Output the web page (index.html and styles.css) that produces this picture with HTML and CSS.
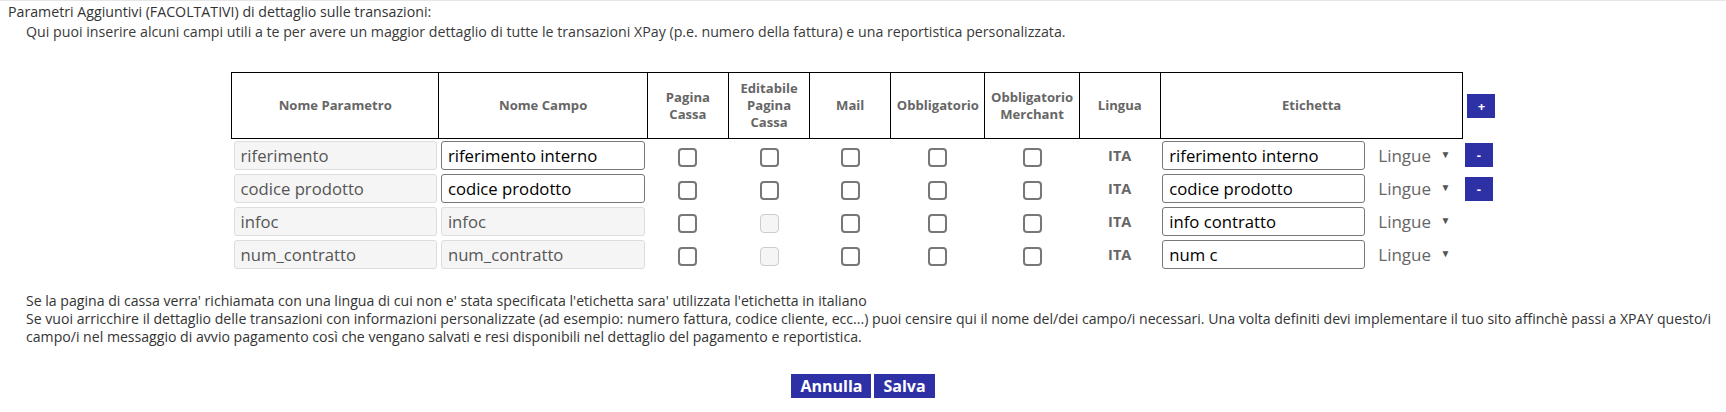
FILE: index.html
```html
<!DOCTYPE html>
<html lang="it">
<head>
    <meta charset="UTF-8">
    <title>Parametri Aggiuntivi</title>
    <link rel="stylesheet" href="styles.css">
</head>
<body>
    <div class="page">
        <div class="intro">
            <div class="intro-title">Parametri Aggiuntivi (FACOLTATIVI) di dettaglio sulle transazioni:</div>
            <div class="intro-text">Qui puoi inserire alcuni campi utili a te per avere un maggior dettaglio di tutte le transazioni XPay (p.e. numero della fattura) e una reportistica personalizzata.</div>
        </div>

        <table class="params">
            <colgroup>
                <col class="c-name">
                <col class="c-field">
                <col class="c-chk">
                <col class="c-chk">
                <col class="c-chk">
                <col class="c-wide">
                <col class="c-wide">
                <col class="c-chk">
                <col class="c-label">
                <col class="c-action">
            </colgroup>
            <thead>
                <tr>
                    <th>Nome Parametro</th>
                    <th>Nome Campo</th>
                    <th>Pagina<br>Cassa</th>
                    <th>Editabile<br>Pagina<br>Cassa</th>
                    <th>Mail</th>
                    <th>Obbligatorio</th>
                    <th>Obbligatorio<br>Merchant</th>
                    <th>Lingua</th>
                    <th>Etichetta</th>
                    <th class="action"><button class="btn-small">+</button></th>
                </tr>
            </thead>
            <tbody>
                <tr>
                    <td><input type="text" class="field readonly" value="riferimento" readonly></td>
                    <td><input type="text" class="field" value="riferimento interno"></td>
                    <td><input type="checkbox"></td>
                    <td><input type="checkbox"></td>
                    <td><input type="checkbox"></td>
                    <td><input type="checkbox"></td>
                    <td><input type="checkbox"></td>
                    <td class="lang">ITA</td>
                    <td>
                        <div class="label-cell">
                            <input type="text" class="field label-input" value="riferimento interno">
                            <span class="lingue">Lingue <span class="caret">&#9660;</span></span>
                        </div>
                    </td>
                    <td class="action"><button class="btn-small">-</button></td>
                </tr>
                <tr>
                    <td><input type="text" class="field readonly" value="codice prodotto" readonly></td>
                    <td><input type="text" class="field" value="codice prodotto"></td>
                    <td><input type="checkbox"></td>
                    <td><input type="checkbox"></td>
                    <td><input type="checkbox"></td>
                    <td><input type="checkbox"></td>
                    <td><input type="checkbox"></td>
                    <td class="lang">ITA</td>
                    <td>
                        <div class="label-cell">
                            <input type="text" class="field label-input" value="codice prodotto">
                            <span class="lingue">Lingue <span class="caret">&#9660;</span></span>
                        </div>
                    </td>
                    <td class="action"><button class="btn-small">-</button></td>
                </tr>
                <tr>
                    <td><input type="text" class="field readonly" value="infoc" readonly></td>
                    <td><input type="text" class="field readonly" value="infoc" readonly></td>
                    <td><input type="checkbox"></td>
                    <td><input type="checkbox" disabled></td>
                    <td><input type="checkbox"></td>
                    <td><input type="checkbox"></td>
                    <td><input type="checkbox"></td>
                    <td class="lang">ITA</td>
                    <td>
                        <div class="label-cell">
                            <input type="text" class="field label-input" value="info contratto">
                            <span class="lingue">Lingue <span class="caret">&#9660;</span></span>
                        </div>
                    </td>
                    <td class="action"></td>
                </tr>
                <tr>
                    <td><input type="text" class="field readonly" value="num_contratto" readonly></td>
                    <td><input type="text" class="field readonly" value="num_contratto" readonly></td>
                    <td><input type="checkbox"></td>
                    <td><input type="checkbox" disabled></td>
                    <td><input type="checkbox"></td>
                    <td><input type="checkbox"></td>
                    <td><input type="checkbox"></td>
                    <td class="lang">ITA</td>
                    <td>
                        <div class="label-cell">
                            <input type="text" class="field label-input" value="num c">
                            <span class="lingue">Lingue <span class="caret">&#9660;</span></span>
                        </div>
                    </td>
                    <td class="action"></td>
                </tr>
            </tbody>
        </table>

        <div class="notes">
            Se la pagina di cassa verra' richiamata con una lingua di cui non e' stata specificata l'etichetta sara' utilizzata l'etichetta in italiano<br>
            Se vuoi arricchire il dettaglio delle transazioni con informazioni personalizzate (ad esempio: numero fattura, codice cliente, ecc...) puoi censire qui il nome del/dei campo/i necessari. Una volta definiti devi implementare il tuo sito affinchè passi a XPAY questo/i campo/i nel messaggio di avvio pagamento così che vengano salvati e resi disponibili nel dettaglio del pagamento e reportistica.
        </div>

        <div class="actions">
            <button class="btn">Annulla</button>
            <button class="btn">Salva</button>
        </div>
    </div>
</body>
</html>
```

FILE: styles.css
```css
body {
    margin: 0;
    font-family: "Open Sans", "Liberation Sans", sans-serif;
    font-size: 14.2px;
    color: #333;
    background-color: #fff;
}

.page {
    border-top: 1px solid #e6e6e6;
}

.intro {
    padding: 1px 8px 0 8px;
    line-height: 20px;
}

.intro-title {
    color: #333;
}

.intro-text {
    padding-left: 18px;
    color: #3a3a3a;
}

.params {
    margin: 30px auto 0 auto;
    border-collapse: collapse;
    table-layout: fixed;
    width: 1264px;
}

.c-name { width: 207px; }
.c-field { width: 208px; }
.c-chk { width: 81px; }
.c-wide { width: 94px; }
.c-label { width: 302px; }
.c-action { width: 32px; }

.params th {
    border: 1px solid #000;
    height: 65px;
    padding: 0;
    font-size: 13.1px;
    font-weight: bold;
    line-height: 17px;
    color: #666;
    text-align: center;
}

.params th.action {
    border: none;
    text-align: left;
    padding-left: 4px;
}

.params td {
    padding: 2px;
    text-align: center;
    vertical-align: middle;
}

.params td.action {
    text-align: left;
}

.field {
    display: block;
    width: 100%;
    height: 29px;
    box-sizing: border-box;
    border: 1px solid #777;
    border-radius: 3px;
    padding: 0 6px;
    font-family: "Open Sans", "Liberation Sans", sans-serif;
    font-size: 16.7px;
    color: #000;
    background-color: #fff;
}

.field.readonly {
    border-color: #ddd;
    background-color: #f5f5f5;
    color: #555;
}

.label-cell {
    display: flex;
    align-items: center;
    gap: 13px;
}

.label-input {
    width: 203px;
    flex: none;
}

.lingue {
    font-size: 17px;
    color: #666;
}

.caret {
    font-size: 10px;
    margin-left: 5px;
    vertical-align: 4px;
    color: #555;
}

.lang {
    font-weight: bold;
    color: #666;
    font-size: 14.5px;
}

input[type="checkbox"] {
    appearance: none;
    -webkit-appearance: none;
    width: 19px;
    height: 19px;
    margin: 3px 0 0 0;
    box-sizing: border-box;
    border: 2px solid #777;
    border-radius: 4px;
    background-color: #fff;
    vertical-align: middle;
}

input[type="checkbox"]:disabled {
    border: 1px solid #ccc;
    background-color: #f5f5f5;
}

.btn-small {
    width: 28px;
    height: 24px;
    border: none;
    padding: 0;
    background-color: #2e31a6;
    color: #fff;
    font-family: "Open Sans", "Liberation Sans", sans-serif;
    font-size: 13px;
    font-weight: bold;
    vertical-align: middle;
}

.notes {
    margin-top: 21px;
    padding: 0 0 0 26px;
    font-size: 14.1px;
    line-height: 18px;
    color: #333;
}

.actions {
    display: flex;
    justify-content: center;
    gap: 3px;
    margin-top: 28px;
}

.btn {
    height: 24px;
    padding: 0 9px;
    border: none;
    background-color: #2e31a6;
    color: #fff;
    font-family: "Open Sans", "Liberation Sans", sans-serif;
    font-size: 16px;
    font-weight: bold;
}
```
